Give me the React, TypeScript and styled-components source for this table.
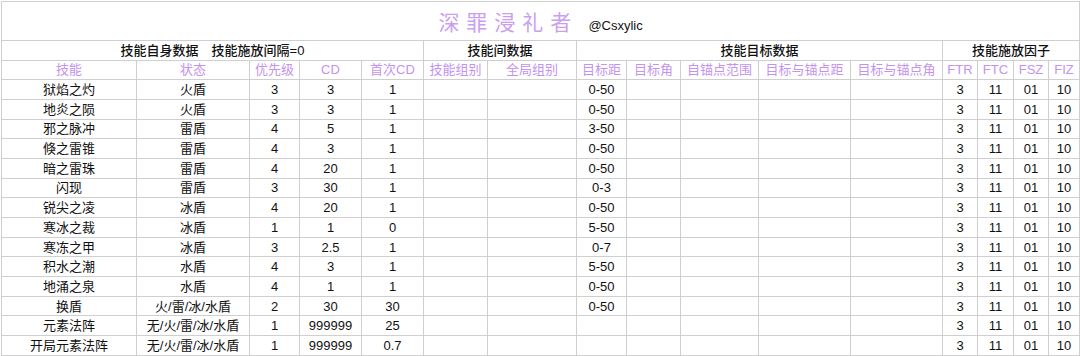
import React from 'react';
import styled, { createGlobalStyle } from 'styled-components';

const GlobalStyle = createGlobalStyle`
  html, body {
    margin: 0;
    padding: 0;
    background: #ffffff;
  }
  body {
    font-family: 'Liberation Sans', 'Noto Sans CJK SC', sans-serif;
    color: #111111;
  }
`;

const Page = styled.div`
  padding: 1px 1px 0 1px;
  width: 1080px;
  box-sizing: border-box;
`;

const Sheet = styled.table`
  width: 1078px;
  table-layout: fixed;
  border-collapse: collapse;
  font-size: 13px;
  line-height: 1;
  border: 1px solid #c9c9c9;
`;

const Cell = styled.td`
  border: 1px solid #cfcfcf;
  text-align: center;
  vertical-align: middle;
  padding: 0;
  white-space: pre;
  overflow: hidden;
`;

const Row = styled.tr<{ $h: number }>`
  height: ${(p) => p.$h}px;
`;

const TitleCell = styled(Cell)`
  padding-top: 1px;
`;

const Title = styled.span`
  font-size: 21px;
  letter-spacing: 7px;
  color: #c9a0f0;
  font-family: 'Noto Sans CJK SC', sans-serif;
`;

const Handle = styled.span`
  font-size: 13px;
  color: #111111;
  margin-left: 10px;
`;

const GroupCell = styled(Cell)`
  font-weight: 500;
  color: #111111;
`;

const LabelCell = styled(Cell)`
  color: #c393ef;
`;

const widths = [135, 113, 50, 62, 62, 64, 89, 50, 54, 78, 92, 92, 35, 36, 35, 31];

const labels = [
  '技能', '状态', '优先级', 'CD', '首次CD',
  '技能组别', '全局组别',
  '目标距', '目标角', '自锚点范围', '目标与锚点距', '目标与锚点角',
  'FTR', 'FTC', 'FSZ', 'FIZ',
];

const skills: [string, string, string, string, string, string][] = [
  ['狱焰之灼', '火盾', '3', '3', '1', '0-50'],
  ['地炎之陨', '火盾', '3', '3', '1', '0-50'],
  ['邪之脉冲', '雷盾', '4', '5', '1', '3-50'],
  ['倏之雷锥', '雷盾', '4', '3', '1', '0-50'],
  ['暗之雷珠', '雷盾', '4', '20', '1', '0-50'],
  ['闪现', '雷盾', '3', '30', '1', '0-3'],
  ['锐尖之凌', '冰盾', '4', '20', '1', '0-50'],
  ['寒冰之裁', '冰盾', '1', '1', '0', '5-50'],
  ['寒冻之甲', '冰盾', '3', '2.5', '1', '0-7'],
  ['积水之潮', '水盾', '4', '3', '1', '5-50'],
  ['地涌之泉', '水盾', '4', '1', '1', '0-50'],
  ['换盾', '火/雷/冰/水盾', '2', '30', '30', '0-50'],
  ['元素法阵', '无/火/雷/冰/水盾', '1', '999999', '25', ''],
  ['开局元素法阵', '无/火/雷/冰/水盾', '1', '999999', '0.7', ''],
];

const factors = ['3', '11', '01', '10'];

export default function App() {
  return (
    <Page>
      <GlobalStyle />
      <Sheet>
        <colgroup>
          {widths.map((w, i) => (
            <col key={i} style={{ width: w }} />
          ))}
        </colgroup>
        <tbody>
          <Row $h={39}>
            <TitleCell colSpan={16}>
              <Title>深罪浸礼者</Title>
              <Handle>@Csxylic</Handle>
            </TitleCell>
          </Row>
          <Row $h={19.5}>
            <GroupCell colSpan={5}>{'技能自身数据　技能施放间隔=0'}</GroupCell>
            <GroupCell colSpan={2}>技能间数据</GroupCell>
            <GroupCell colSpan={5}>技能目标数据</GroupCell>
            <GroupCell colSpan={4}>技能施放因子</GroupCell>
          </Row>
          <Row $h={19.7}>
            {labels.map((l) => (
              <LabelCell key={l}>{l}</LabelCell>
            ))}
          </Row>
          {skills.map(([name, state, prio, cd, first, dist]) => (
            <Row $h={19.7} key={name}>
              <Cell>{name}</Cell>
              <Cell>{state}</Cell>
              <Cell>{prio}</Cell>
              <Cell>{cd}</Cell>
              <Cell>{first}</Cell>
              <Cell />
              <Cell />
              <Cell>{dist}</Cell>
              <Cell />
              <Cell />
              <Cell />
              <Cell />
              {factors.map((f, i) => (
                <Cell key={i}>{f}</Cell>
              ))}
            </Row>
          ))}
        </tbody>
      </Sheet>
    </Page>
  );
}
